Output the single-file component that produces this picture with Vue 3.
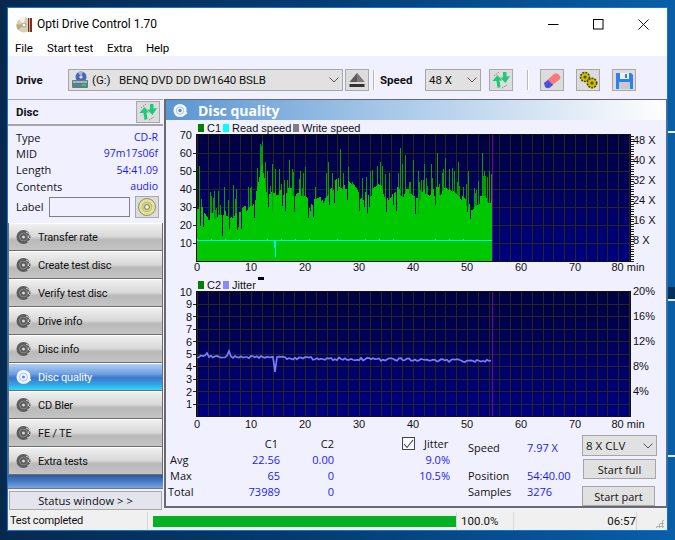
<script setup>
const tabs = [
  { label: 'Transfer rate' }, { label: 'Create test disc' }, { label: 'Verify test disc' },
  { label: 'Drive info' }, { label: 'Disc info' }, { label: 'Disc quality', active: true },
  { label: 'CD Bler' }, { label: 'FE / TE' }, { label: 'Extra tests' },
]
const discInfo = [
  ['Type', 'CD-R'], ['MID', '97m17s06f'], ['Length', '54:41.09'], ['Contents', 'audio'],
]
const stats = [
  ['Avg', '22.56', '0.00'], ['Max', '65', '0'], ['Total', '73989', '0'],
]

let seed = 1234567
const rnd = () => { seed = (seed * 16807) % 2147483647; return seed / 2147483647 }

const X0 = 197
const PX = 5.4
const vGrid = Array.from({ length: 41 }, (_, i) => X0 + i * 10.8)
const gridV = (top, bottom) => vGrid.map((x) => `M${Math.round(x) + 0.5} ${top}V${bottom}`).join('')
const grid1 = gridV(135, 261) + [153, 171, 189, 207, 225, 243].map((y) => `M197 ${y + 0.5}H630`).join('')
const grid2 = gridV(292, 416) + [1, 2, 3, 4, 5, 6, 7, 8, 9].map((k) => `M197 ${Math.round(291 + 12.55 * k) + 0.5}H630`).join('')

const base = [27,27,24,24,26,26,24,26,26,28,31,37,52,36,35,35,36,37,36,38,36,33,32,33,37,40,43,41,42,40,35,36,36,38,41,33,36,38,36,37,36,35,37,36,38,38,42,39,36,33,30,30,32,33,31,31]
const peaks = { 0.4:53, 3.1:39, 3.9:39, 5:41, 6.7:42, 9.5:41, 10:41, 11.6:65, 11.8:64, 12.5:55, 13:50, 13.8:54, 15.1:51, 15.5:43, 16.2:45, 17:56, 17.5:51, 18:44, 19:50, 20:52, 24.2:55, 25:49, 26.5:62, 27:49, 28:52, 28.7:44, 30.5:46, 32:50, 33.3:53, 33.8:55, 34.2:53, 35.5:49, 37.6:63, 38:54, 38.6:59, 39.2:44, 40:56, 41:50, 42:54, 43.4:54, 44.4:60, 45.9:57, 46.6:51, 48.4:55, 50.1:50, 52.8:60, 53.2:50, 54:50 }
const dips = { 4.7:14, 6:18, 7.5:19, 10.5:24, 13.2:30, 17.9:27, 21:28, 30:28, 35:27, 36.8:28, 44:31, 50:27 }
const peakPx = {}
for (const k in peaks) peakPx[Math.round(k * PX)] = peaks[k]
const dipPx = {}
for (const k in dips) dipPx[Math.round(k * PX)] = dips[k]

let fill = ''
let spikes = ''
let hold = 0
let held = 0
for (let p = 0; p < 296; p++) {
  const m = p / PX
  const i = Math.floor(m)
  const b = base[i] + (base[i + 1] - base[i]) * (m - i)
  if (hold <= 0) { held = (rnd() - 0.5) * 6; hold = 2 + Math.floor(rnd() * 3) }
  hold--
  let solid = b + held + 1
  let top = solid
  const r = rnd()
  if (r < 0.2) top = solid + 4 + rnd() * 10
  if (r > 0.93) { solid -= 6 + rnd() * 5; top = solid }
  if (peakPx[p]) top = peakPx[p]
  if (dipPx[p]) { solid = dipPx[p]; top = solid }
  const x = X0 + p + 0.5
  const ys = (261 - solid * 1.8).toFixed(0)
  const yt = (261 - top * 1.8).toFixed(0)
  fill += `M${x} ${ys}V261`
  if (top > solid) spikes += `M${x} ${yt}V${ys}`
}

let jit = ''
let readBlips = ''
for (let p = 0; p <= 295; p += 2) {
  const m = p / PX
  let y = 356.5 + m * 0.085 + (rnd() - 0.5) * 3
  if (Math.abs(m - 14.5) < 0.2) y = 372
  if (Math.abs(m - 5.9) < 0.2) y = 351
  if (Math.abs(m - 2) < 0.2) y = 353
  jit += `${p === 0 ? 'M' : 'L'}${X0 + p} ${y.toFixed(1)}`
  if (p % 14 === 0 && rnd() > 0.45) readBlips += `M${X0 + p + 0.5} 239V240`
}

const speedTicks = Array.from({ length: 51 }, (_, i) => `M631 ${Math.round(261 - i * 2.5) + 0.5}H634`).join('')
const leftTicks1 = [153, 171, 189, 207, 225, 243].map((y) => `M193 ${y + 0.5}H196`).join('')
const leftTicks2 = [1, 2, 3, 4, 5, 6, 7, 8, 9].map((k) => `M193 ${Math.round(291 + 12.55 * k) + 0.5}H196`).join('')
const xLabels = [0, 10, 20, 30, 40, 50, 60, 70]
const left1 = [70, 60, 50, 40, 30, 20, 10]
const left2 = [10, 9, 8, 7, 6, 5, 4, 3, 2, 1]
const right1 = [['48 X', 140], ['40 X', 160], ['32 X', 180], ['24 X', 200], ['16 X', 220], ['8 X', 240]]
const right2 = [['20%', 291], ['16%', 316], ['12%', 341], ['8%', 366], ['4%', 391]]
</script>

<template>
  <div class="desktop">
    <div class="window">
      <header class="titlebar">
        <svg class="app-icon" width="17" height="17" viewBox="0 0 17 17">
          <circle cx="8" cy="9" r="7.500" fill="#d8d0b0" />
          <path d="M8 9L3 3.500A7.500 7.500 0 0 1 9 1.500Z" fill="#f6f2e4" />
          <path d="M8 9L2 14A7.500 7.500 0 0 1 .6 8Z" fill="#b8ac88" />
          <circle cx="8" cy="9" r="2" fill="#fff" stroke="#8a8268" stroke-width=".7" />
          <rect x="12" y="2" width="4" height="14" fill="#7a2e26" />
          <rect x="13" y="2" width="1" height="14" fill="#b8b0a0" />
        </svg>
        <span class="app-title">Opti Drive Control 1.70</span>
        <div class="winctl">
          <svg width="11" height="11" viewBox="0 0 11 11"><path d="M0 5.500H10.500" stroke="#000" fill="none" /></svg>
          <svg width="11" height="11" viewBox="0 0 11 11"><rect x=".5" y=".5" width="9.500" height="9.500" stroke="#000" fill="none" /></svg>
          <svg width="11" height="11" viewBox="0 0 11 11"><path d="M.5 .5L10.500 10.500M10.500 .5L.5 10.500" stroke="#000" fill="none" stroke-width=".9" /></svg>
        </div>
      </header>

      <nav class="menubar">
        <span class="m1">File</span><span class="m2">Start test</span><span class="m3">Extra</span><span>Help</span>
      </nav>

      <div class="toolbar">
        <b class="tb-drive">Drive</b>
        <div class="combo combo-drive">
          <svg width="18" height="18" viewBox="0 0 18 18">
            <circle cx="10" cy="6" r="5.500" fill="#4a68b0" />
            <circle cx="10" cy="6" r="1.600" fill="#dfe6f5" />
            <path d="M10 6L7 1.500A5.500 5.500 0 0 1 12 1Z" fill="#9db2e0" />
            <rect x="1" y="9" width="16" height="8" rx="1" fill="#5d7f8c" />
            <rect x="2" y="10" width="14" height="2" fill="#9cb6c0" />
            <rect x="11" y="13" width="4" height="2" fill="#30d060" />
          </svg>
          <span class="drive-letter">(G:)</span>
          <span class="drive-name">BENQ DVD DD DW1640 BSLB</span>
          <svg class="chev" width="10" height="6" viewBox="0 0 10 6"><path d="M.5 .5L5 5L9.5 .5" stroke="#555" fill="none" /></svg>
        </div>
        <button class="tbtn eject">
          <svg width="16" height="15" viewBox="0 0 16 15">
            <path d="M8 0L15.500 9H.5Z" fill="#5a5a5a" />
            <path d="M8 0L15.500 9H8Z" fill="#7a7a7a" />
            <rect x=".5" y="11" width="15" height="3" fill="#333" />
          </svg>
        </button>
        <i class="vsep sep1"></i>
        <b class="tb-speed">Speed</b>
        <div class="combo combo-speed">
          <span>48 X</span>
          <svg class="chev" width="10" height="6" viewBox="0 0 10 6"><path d="M.5 .5L5 5L9.5 .5" stroke="#555" fill="none" /></svg>
        </div>
        <button class="tbtn refresh-btn">
          <svg width="20" height="18" viewBox="0 0 20 18">
            <path d="M3 5L8 1M11 17L16 14" stroke="#8a8a8a" stroke-dasharray="1.500 1" fill="none" />
            <path d="M1.500 10L6.500 4L11 9.500L8.500 9.500L9.500 16L6.500 17L5.500 10Z" fill="#20c878" />
            <path d="M9 6.500L12 6.500L12 1L15.500 1L15.500 5.500L19 5L14.500 12Z" fill="#20c878" />
          </svg>
        </button>
        <i class="vsep sep2"></i>
        <button class="tbtn action-btn">
          <svg width="18" height="17" viewBox="0 0 18 17">
            <path d="M1 11L11 2Q13 .5 15 2L17 4Q18 6 16.500 7.500L7 15Z" fill="#f47a80" />
            <path d="M1 11L5 8L10 13L7 15.500Q4 17 2 15Z" fill="#4a50e0" />
          </svg>
        </button>
        <button class="tbtn action-btn">
          <svg width="19" height="18" viewBox="0 0 19 18">
            <circle cx="6" cy="6" r="4.500" fill="#c8c000" stroke="#504a10" stroke-width="1.600" stroke-dasharray="2 1" />
            <circle cx="6" cy="6" r="1.500" fill="#504a10" />
            <circle cx="13" cy="12" r="4.700" fill="#c8c000" stroke="#504a10" stroke-width="1.600" stroke-dasharray="2 1" />
            <circle cx="13" cy="12" r="1.600" fill="#504a10" />
          </svg>
        </button>
        <button class="tbtn action-btn">
          <svg width="17" height="17" viewBox="0 0 17 17">
            <path d="M0 1H15L17 3V17H0Z" fill="#2f80e8" />
            <rect x="4" y="1" width="9" height="6" fill="#eef" />
            <rect x="9" y="2" width="2" height="4" fill="#2f80e8" />
            <rect x="3" y="10" width="11" height="7" fill="#c8c8d4" />
          </svg>
        </button>
      </div>

      <div class="body">
        <aside class="side">
          <div class="disc-head">
            <b>Disc</b>
            <button class="tbtn head-btn">
              <svg width="20" height="18" viewBox="0 0 20 18">
                <path d="M3 5L8 1M11 17L16 14" stroke="#8a8a8a" stroke-dasharray="1.500 1" fill="none" />
                <path d="M1.500 10L6.500 4L11 9.500L8.500 9.500L9.500 16L6.500 17L5.500 10Z" fill="#20c878" />
                <path d="M9 6.500L12 6.500L12 1L15.500 1L15.500 5.500L19 5L14.500 12Z" fill="#20c878" />
              </svg>
            </button>
          </div>
          <div class="disc-info">
            <div v-for="r in discInfo" :key="r[0]" class="info-row">
              <span>{{ r[0] }}</span><span class="val">{{ r[1] }}</span>
            </div>
            <div class="label-row">
              <span>Label</span>
              <div class="label-input"></div>
              <button class="tbtn disc-btn">
                <svg width="18" height="18" viewBox="0 0 18 18">
                  <circle cx="9" cy="9" r="8.500" fill="#e6e690" stroke="#888" />
                  <circle cx="9" cy="9" r="5" fill="#d4d480" stroke="#a8a860" stroke-width=".6" />
                  <circle cx="9" cy="9" r="2.400" fill="#f4f4e0" stroke="#777" />
                </svg>
              </button>
            </div>
          </div>

          <div v-for="t in tabs" :key="t.label" class="tab" :class="{ active: t.active }">
            <svg width="16" height="16" viewBox="0 0 16 16">
              <circle cx="7.500" cy="8" r="7" :fill="t.active ? '#f2f6ff' : '#5c5c5c'" />
              <circle cx="7.500" cy="8" r="4" fill="none" :stroke="t.active ? '#a8c0e8' : '#8c8c8c'" />
              <circle cx="7.500" cy="8" r="1.500" :fill="t.active ? '#5a88d0' : '#d8d8d8'" />
              <path d="M10 3L14 5L12 8L15 11L11 13" fill="none" :stroke="t.active ? '#fff' : '#d0d0d0'" />
            </svg>
            <span>{{ t.label }}</span>
          </div>

          <div class="side-fill"></div>
          <button class="status-btn">Status window &gt; &gt;</button>
        </aside>

        <main class="main">
          <div class="main-title">
            <svg width="15" height="15" viewBox="0 0 16 16">
              <circle cx="7.500" cy="8" r="7" fill="#f2f6ff" />
              <circle cx="7.500" cy="8" r="4" fill="none" stroke="#a8c0e8" />
              <circle cx="7.500" cy="8" r="1.800" fill="#5a88d0" />
              <path d="M10 3L14 5L12 8L15 11L11 13" fill="none" stroke="#fff" />
            </svg>
            <b>Disc quality</b>
          </div>

          <div class="legend legend1">
            <i class="sw" style="background:#008000"></i><span class="l1">C1</span>
            <i class="sw" style="background:#00ffff"></i><span class="l2">Read speed</span>
            <i class="sw" style="background:#808080"></i><span>Write speed</span>
          </div>
          <svg class="chart chart1" width="499" height="145" viewBox="166 134 499 145">
            <defs>
              <linearGradient id="plotbg" x1="0" y1="0" x2="0" y2="1">
                <stop offset="0" stop-color="#000040" />
                <stop offset="1" stop-color="#000080" />
              </linearGradient>
            </defs>
            <rect x="197" y="135" width="433" height="126" fill="url(#plotbg)" />
            <path :d="grid1" stroke="#28271c" fill="none" shape-rendering="crispEdges" />
            <path :d="fill" stroke="#00c800" fill="none" shape-rendering="crispEdges" />
            <path :d="spikes" stroke="#00a000" fill="none" shape-rendering="crispEdges" />
            <path d="M197 240.500H492" stroke="#00f0f0" fill="none" shape-rendering="crispEdges" />
            <path :d="readBlips" stroke="#00f0f0" fill="none" shape-rendering="crispEdges" />
            <path d="M275.500 240V257M274.500 240V248" stroke="#00f0f0" fill="none" shape-rendering="crispEdges" />
            <path d="M492.500 135V261" stroke="#800080" fill="none" shape-rendering="crispEdges" />
            <path d="M196.500 134.500H630.500V261.500H196.500Z" stroke="#111" fill="none" shape-rendering="crispEdges" />
            <path :d="speedTicks + leftTicks1" stroke="#222" fill="none" shape-rendering="crispEdges" />
            <g class="ax">
              <text v-for="(v, i) in left1" :key="v" x="192" :y="139 + i * 18" text-anchor="end">{{ v }}</text>
              <text v-for="v in xLabels" :key="v" :x="197 + v * 5.4" y="271" text-anchor="middle">{{ v }}</text>
              <text x="628" y="271" text-anchor="middle">80 min</text>
              <text v-for="r in right1" :key="r[0]" x="633" :y="r[1] + 4">{{ r[0] }}</text>
            </g>
          </svg>

          <div class="legend legend2">
            <i class="sw" style="background:#008000"></i><span class="l1">C2</span>
            <i class="sw" style="background:#8888ff"></i><span class="l3">Jitter</span>
            <i class="dash"></i>
          </div>
          <svg class="chart chart2" width="499" height="145" viewBox="166 290 499 145">
            <rect x="197" y="291" width="433" height="125" fill="url(#plotbg)" />
            <path :d="grid2" stroke="#28271c" fill="none" shape-rendering="crispEdges" />
            <path :d="jit" stroke="#7c7cf4" stroke-width="1.700" fill="none" />
            <path d="M492.500 291V416" stroke="#800080" fill="none" shape-rendering="crispEdges" />
            <path d="M196.500 291.500H630.500V416.500H196.500Z" stroke="#111" fill="none" shape-rendering="crispEdges" />
            <path :d="leftTicks2" stroke="#222" fill="none" shape-rendering="crispEdges" />
            <g class="ax">
              <text v-for="(v, i) in left2" :key="v" x="192" :y="295.500 + i * 12.550" text-anchor="end">{{ v }}</text>
              <text v-for="v in xLabels" :key="v" :x="197 + v * 5.4" y="427.500" text-anchor="middle">{{ v }}</text>
              <text x="628" y="427.500" text-anchor="middle">80 min</text>
              <text v-for="r in right2" :key="r[0]" x="633" :y="r[1] + 4">{{ r[0] }}</text>
            </g>
          </svg>

          <section class="stats">
            <div class="stat-grid">
              <span></span><span class="hd hd1">C1</span><span class="hd">C2</span>
              <template v-for="r in stats" :key="r[0]">
                <span class="rl" :class="{ total: r[0] === 'Total' }">{{ r[0] }}</span>
                <span class="val">{{ r[1] }}</span><span class="val">{{ r[2] }}</span>
              </template>
            </div>
            <div class="jitter">
              <div class="jitter-head">
                <span class="check">
                  <svg width="11" height="10" viewBox="0 0 11 10"><path d="M1 5L4 8.500L10 1" stroke="#444" stroke-width="1.100" fill="none" /></svg>
                </span>
                <span>Jitter</span>
              </div>
              <span class="val">9.0%</span>
              <span class="val">10.5%</span>
            </div>
            <div class="speedbox">
              <span>Speed</span><span class="val-l">7.97 X</span>
              <span class="gap"></span><span class="gap"></span>
              <span>Position</span><span class="val-l">54:40.00</span>
              <span>Samples</span><span class="val-l">3276</span>
            </div>
            <div class="controls">
              <div class="combo combo-clv">
                <span>8 X CLV</span>
                <svg class="chev" width="10" height="6" viewBox="0 0 10 6"><path d="M.5 .5L5 5L9.5 .5" stroke="#555" fill="none" /></svg>
              </div>
              <button class="start full">Start full</button>
              <button class="start part">Start part</button>
            </div>
          </section>
        </main>
      </div>

      <footer class="status">
        <span class="st-msg">Test completed</span>
        <div class="st-bar"></div>
        <span class="st-pct">100.0%</span>
        <span class="st-time">06:57</span>
        <span class="st-grip"></span>
      </footer>
    </div>
  </div>
</template>

<style>
html, body { margin: 0; padding: 0; overflow: hidden; }
</style>

<style scoped>
.desktop {
  width: 675px; height: 540px; box-sizing: border-box; padding: 7px 7px 9px 7px; overflow: hidden;
  font-family: Roboto, "Liberation Sans", sans-serif; font-size: 12px; color: #111;
  background:
    linear-gradient(#e4f0fa, #e4f0fa) 668px 131px / 7px 2px no-repeat,
    linear-gradient(#d8e8f8, #d8e8f8) 668px 299px / 7px 2px no-repeat,
    linear-gradient(#04305c, #04305c) 668px 287px / 7px 12px no-repeat,
    linear-gradient(#d8e8f8, #d8e8f8) 668px 455px / 7px 2px no-repeat,
    linear-gradient(90deg, #07294e 0, #053b70 45%, #0a5ea8 100%);
}
.window {
  height: 524px; box-sizing: border-box; border: 1px solid #0f78cc; background: #f0f0ff;
  display: flex; flex-direction: column;
}
.titlebar { height: 32px; background: #fff; display: flex; align-items: center; padding-left: 8px; flex: none; }
.app-icon { margin-right: 4px; }
.app-title { font-size: 12px; color: #000; }
.winctl { margin-left: auto; display: flex; align-items: center; gap: 34px; padding-right: 18px; }
.menubar { height: 16px; padding: 0 0 0 7px; background: #fff; display: flex; flex: none; align-items: center; line-height: 16px; color: #000; font-size: 11.500px; letter-spacing: -.1px; }
.m1 { width: 32px; }
.m2 { width: 60px; }
.m3 { width: 39px; }
.toolbar { height: 43px; flex: none; display: flex; align-items: center; padding-left: 8px; padding-top: 5px; box-sizing: border-box; }
.tb-drive { width: 52px; font-size: 11.500px; }
.tb-speed { margin-left: 6px; width: 45px; font-size: 11.500px; }
.combo {
  height: 22px; box-sizing: border-box; background: #e1e1e1; border: 1px solid #a6a6a6;
  display: flex; align-items: center; position: relative; color: #111; font-size: 11.500px;
}
.combo-drive { width: 275px; padding-left: 2px; }
.drive-letter { margin-left: 3px; width: 27px; }
.drive-name { letter-spacing: -.12px; }
.combo-speed { width: 56px; padding-left: 3px; }
.chev { margin-left: auto; margin-right: 3px; }
.tbtn {
  width: 24px; height: 22px; padding: 0; box-sizing: border-box; background: #dcdcdc; border: 1px solid #a8a8a8;
  display: flex; align-items: center; justify-content: center;
}
.eject { margin-left: 2px; }
.vsep { width: 1px; height: 20px; background: #b8b8c0; box-shadow: 1px 0 #fff; }
.sep1 { margin-left: 4px; }
.refresh-btn { margin-left: 8px; }
.sep2 { margin-left: 14px; }
.action-btn { margin-left: 12px; }

.body { height: 411px; flex: none; display: flex; }
.side { width: 155px; flex: none; margin-right: 1px; display: flex; flex-direction: column; border-top: 1px solid #a6a6a6; box-sizing: border-box; }
.disc-head { height: 26px; box-sizing: border-box; flex: none; border-bottom: 2px solid #a6a6a6; display: flex; align-items: center; justify-content: space-between; padding: 0 3px 0 8px; font-size: 11.500px; }
.head-btn { height: 22px; }
.disc-info { height: 97px; flex: none; padding: 3px 4px 0 8px; box-sizing: border-box; font-family: "Open Sans", sans-serif; font-size: 11px; }
.info-row { height: 16.300px; display: flex; justify-content: space-between; align-items: center; }
.val, .val-l { color: #1a1aee; }
.side .val { padding-right: 1px; font-size: 10.500px; }
.label-row { display: flex; align-items: center; margin-top: 2px; }
.label-row span { width: 33px; padding-bottom: 2px; }
.label-input { width: 80px; height: 18px; border: 1px solid #808080; background: #f0f0ff; margin-left: 0; }
.disc-btn { margin-left: 5px; height: 22px; }
.tab {
  height: 28px; flex: none; box-sizing: border-box; display: flex; align-items: center; gap: 6px; padding: 1px 0 0 7px;
  font-family: Roboto, sans-serif; font-size: 11px; letter-spacing: -.2px; color: #111;
  border: 1px solid #6e6e6e; border-width: 0 1px 1px 1px;
  background: linear-gradient(#f2f2f2 0, #d8d8d8 50%, #b9b9b9 62%, #c4c4c4 100%);
  box-shadow: inset 0 1px 0 #fff;
}
.tab.active {
  color: #fff;
  background: linear-gradient(#b6d4f8 0, #6f9fe0 40%, #3a78cc 55%, #34a4e8 80%, #2edcf4 100%);
}
.side-fill { height: 14px; box-sizing: border-box; flex: none; background: linear-gradient(#2a5aa4, #4a7cc4 50%, #7aa4e0); border-bottom: 1px solid #777; }
.status-btn {
  height: 19px; flex: none; margin: 2px 1px 0 1px; padding: 0; background: #e4e4ec; border: 1px solid #a8a8a8;
  font-family: "Open Sans", sans-serif; font-size: 11.200px; color: #111;
}

.main { flex: 1; height: 409px; box-sizing: border-box; border: solid #6a6a6a; border-width: 1px 1px 2px 2px; display: flex; flex-direction: column; }
.main-title {
  height: 20px; flex: none; display: flex; align-items: center; padding-left: 7px; gap: 10px;
  background: linear-gradient(90deg, #5a96d2, #a8c8e8 45%, #d6e5f3 75%, #fff);
  color: #fff; font-size: 14px; font-family: "Open Sans", sans-serif;
}
.legend { display: flex; align-items: center; font-family: "Liberation Sans", sans-serif; font-size: 11px; padding-left: 32px; color: #111; flex: none; white-space: nowrap; }
.legend1 { height: 14px; padding-top: 1px; box-sizing: border-box; }
.legend2 { height: 11px; }
.sw { width: 6px; height: 8px; margin-right: 3px; flex: none; }
.l1 { width: 16px; flex: none; }
.l2 { width: 61px; flex: none; }
.dash { width: 6px; height: 3px; background: #000; margin: -2px 0 0 2px; align-self: flex-start; }
.chart { display: block; flex: none; overflow: visible; }
.ax text { font-family: "Liberation Sans", sans-serif; font-size: 11px; fill: #111; }

.stats { flex: 1; display: flex; font-family: "Open Sans", sans-serif; font-size: 11px; color: #111; }
.stat-grid { width: 166px; margin-left: 2px; display: grid; grid-template-columns: 60px 52px 54px; grid-auto-rows: 16px; padding-top: 1px; align-self: flex-start; }
.stat-grid .val, .hd { text-align: right; line-height: 16px; }
.hd1 { padding-right: 2px; }
.rl { padding-left: 2px; line-height: 16px; }
.rl.total { padding-left: 0; }
.jitter { margin-left: 68px; width: 48px; display: flex; flex-direction: column; }
.jitter .val { text-align: right; line-height: 16px; }
.jitter-head { height: 17px; display: flex; align-items: center; gap: 9px; white-space: nowrap; }
.check { width: 13px; height: 13px; box-sizing: border-box; flex: none; border: 1px solid #444; display: flex; align-items: center; justify-content: center; background: #f8f8ff; }
.speedbox { margin-left: 18px; width: 114px; display: grid; grid-template-columns: 59px 55px; grid-template-rows: 24px 8px 16px 16px; align-items: center; align-self: flex-start; }
.controls { width: 75px; flex: none; display: flex; flex-direction: column; }
.combo-clv { width: 75px; height: 21px; padding-left: 3px; }
.start { height: 20px; padding: 0; background: #e1e1e1; border: 1px solid #a6a6a6; font-family: "Open Sans", sans-serif; font-size: 11px; color: #111; }
.full { width: 73px; margin: 3px 0 0 1px; }
.part { width: 73px; margin-top: 7px; }

.status { flex: 1; position: relative; display: flex; align-items: center; background: #f0f0f0; color: #111; font-size: 11.500px; padding-top: 2px; box-sizing: border-box; }
.st-msg { width: 140px; height: 18px; line-height: 18px; padding-left: 2px; box-sizing: border-box; font-size: 11px; letter-spacing: -.2px; border-right: 1px solid #d8d8d8; }
.st-bar { width: 303px; height: 11px; margin: 1px 0 0 5px; background: #06b025; }
.st-pct { height: 18px; line-height: 18px; width: 58px; box-sizing: border-box; padding-left: 4px; border-left: 1px solid #d8d8d8; border-right: 1px solid #d8d8d8; }
.st-time { height: 18px; line-height: 18px; width: 123px; box-sizing: border-box; text-align: right; border-right: 1px solid #d8d8d8; }
.st-grip { position: absolute; right: 3px; bottom: 2px; width: 9px; height: 9px; background: radial-gradient(circle, #b0b0b0 1px, transparent 1.200px) 0 0 / 3px 3px; clip-path: polygon(100% 0, 100% 100%, 0 100%); }
</style>
